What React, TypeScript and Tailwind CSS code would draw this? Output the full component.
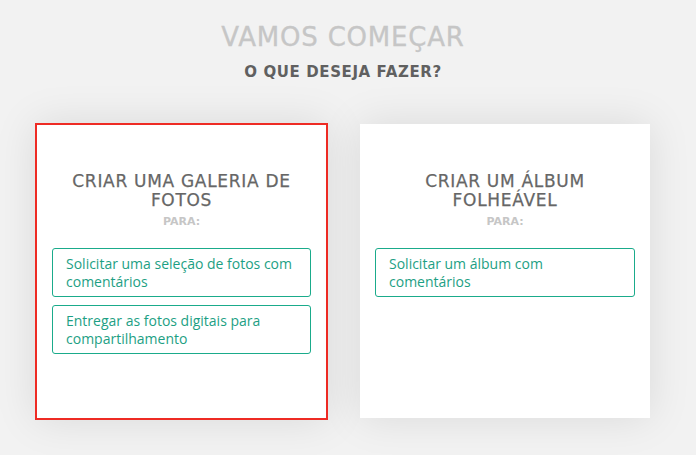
import React from "react";

const head = { fontFamily: '"DejaVu Sans", "Liberation Sans", sans-serif' };
const body = { fontFamily: '"Open Sans", "Liberation Sans", sans-serif' };

function Option({ text }: { text: string }) {
  return (
    <div
      className="border border-[#1aab8b] rounded-[3px] pl-[13px] pr-3 py-[6px] text-[14px] leading-[17.5px] text-[#1d9f84]"
      style={body}
    >
      {text}
    </div>
  );
}

function Card({ title, options, selected }: { title: string[]; options: string[]; selected?: boolean }) {
  return (
    <div
      className={
        selected
          ? "w-[293px] h-[297px] bg-white border-2 border-[#ee2b24] px-[15px] pt-[47px] shadow-[0_0_40px_rgba(0,0,0,0.1)]"
          : "w-[290px] h-[294px] mt-px bg-white px-[15px] pt-[48px] shadow-[0_0_40px_rgba(0,0,0,0.1)]"
      }
    >
      <div
        className="text-center text-[17px] leading-[19px] tracking-[0.7px] text-[#666666] [-webkit-text-stroke:0.25px_#666666]"
        style={head}
      >
        {title.map((t) => (
          <div key={t}>{t}</div>
        ))}
      </div>
      <div className="text-center mt-[5px] text-[11px] leading-[14px] font-bold text-[#c6c6c6]" style={head}>
        PARA:
      </div>
      <div className="mt-[19px] flex flex-col gap-2">
        {options.map((o) => (
          <Option key={o} text={o} />
        ))}
      </div>
    </div>
  );
}

export default function App() {
  return (
    <div className="w-[696px] h-[455px] bg-[#f2f2f2] overflow-hidden">
      <div className="w-[686px] pt-[21px] flex flex-col items-center">
        <div
          className="text-[26px] leading-[32px] tracking-[0.8px] text-[#c6c6c6] [-webkit-text-stroke:0.3px_#c6c6c6]"
          style={head}
        >
          VAMOS COMEÇAR
        </div>
        <div className="mt-[9px] text-[15px] leading-[20px] tracking-[0.6px] font-bold text-[#606060]" style={head}>
          O QUE DESEJA FAZER?
        </div>
      </div>
      <div className="mt-[41px] pl-[35px] flex items-start gap-[32px]">
        <Card
          selected
          title={["CRIAR UMA GALERIA DE", "FOTOS"]}
          options={["Solicitar uma seleção de fotos com comentários", "Entregar as fotos digitais para compartilhamento"]}
        />
        <Card title={["CRIAR UM ÁLBUM", "FOLHEÁVEL"]} options={["Solicitar um álbum com comentários"]} />
      </div>
    </div>
  );
}
